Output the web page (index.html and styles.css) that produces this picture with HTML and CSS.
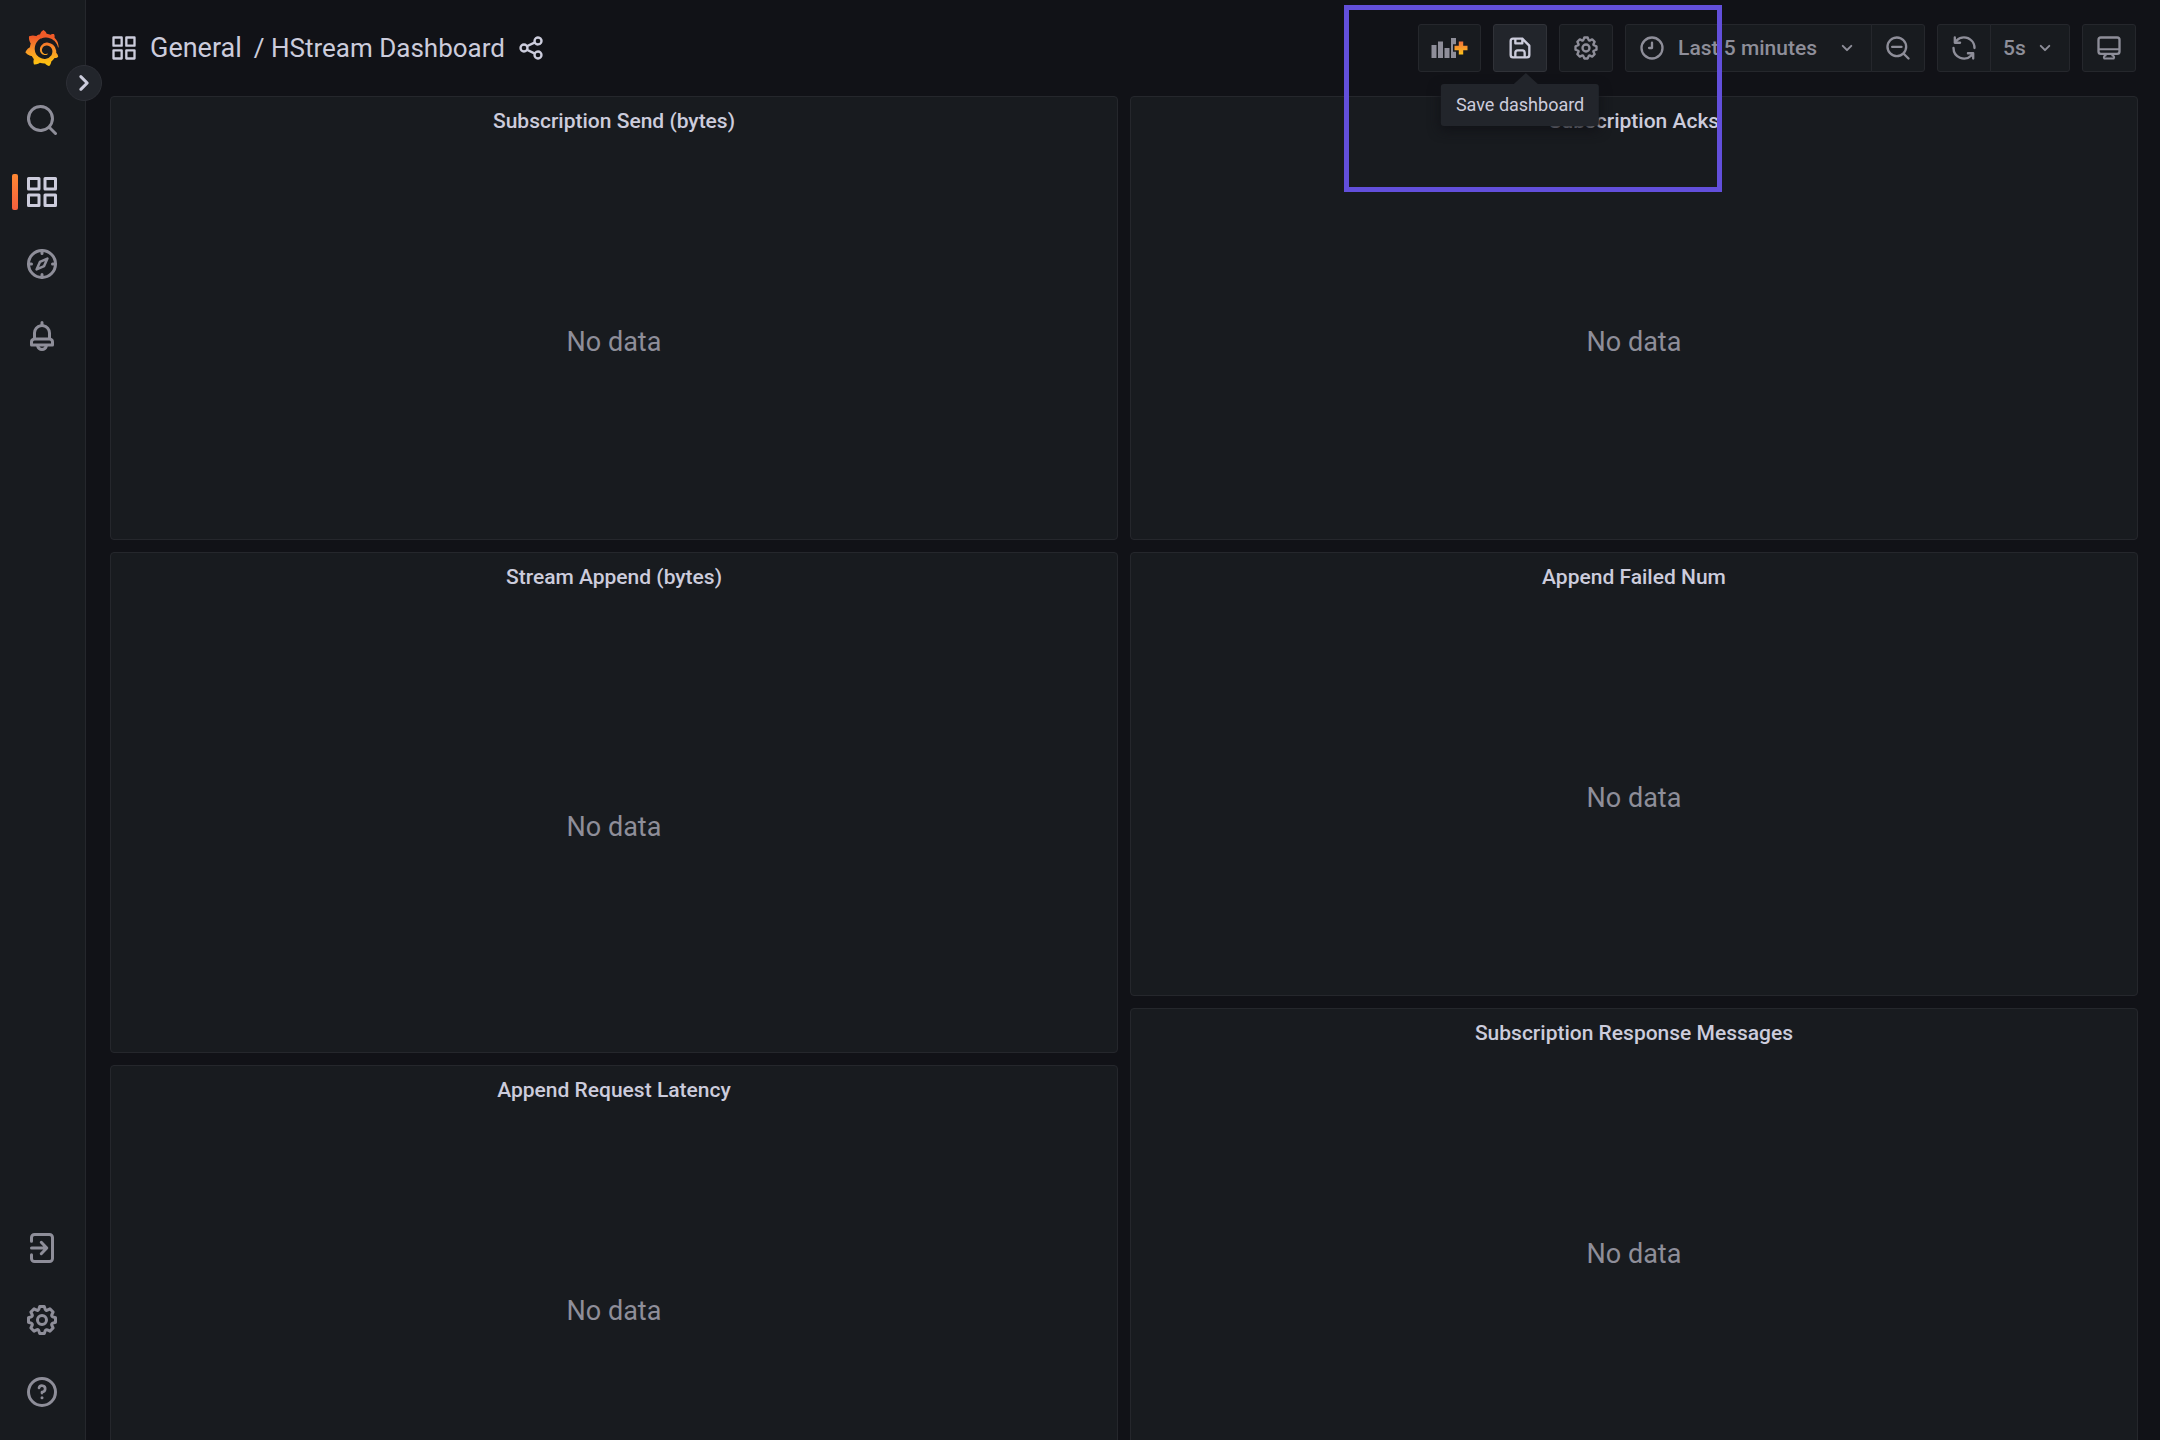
FILE: index.html
```html
<!DOCTYPE html>
<html lang="en">
<head>
<meta charset="utf-8">
<meta name="viewport" content="width=device-width, initial-scale=1">
<title>HStream Dashboard - Grafana</title>
<link rel="stylesheet" href="styles.css">
</head>
<body>
<svg class="sprite" aria-hidden="true">
  <defs>
    <linearGradient id="logo-fill" x1="0" y1="1" x2="0" y2="0">
      <stop offset="0" stop-color="#fcc90c"/>
      <stop offset="0.45" stop-color="#f9952a"/>
      <stop offset="0.8" stop-color="#f05a28"/>
      <stop offset="1" stop-color="#f05a28"/>
    </linearGradient>
    <linearGradient id="plus-fill" x1="0" y1="0" x2="0" y2="1">
      <stop offset="0" stop-color="#f2713a"/>
      <stop offset="1" stop-color="#fcc21b"/>
    </linearGradient>
  </defs>
  <symbol id="apps" viewBox="0 0 24 24"><path d="M10,13H3a1,1,0,0,0-1,1v7a1,1,0,0,0,1,1h7a1,1,0,0,0,1-1V14A1,1,0,0,0,10,13ZM9,20H4V15H9ZM21,2H14a1,1,0,0,0-1,1v7a1,1,0,0,0,1,1h7a1,1,0,0,0,1-1V3A1,1,0,0,0,21,2ZM20,9H15V4h5Zm1,4H14a1,1,0,0,0-1,1v7a1,1,0,0,0,1,1h7a1,1,0,0,0,1-1V14A1,1,0,0,0,21,13Zm-1,7H15V15h5ZM10,2H3A1,1,0,0,0,2,3v7a1,1,0,0,0,1,1h7a1,1,0,0,0,1-1V3A1,1,0,0,0,10,2ZM9,9H4V4H9Z"/></symbol>
  <symbol id="search" viewBox="0 0 24 24"><path d="M21.71,20.29,18,16.61A9,9,0,1,0,16.61,18l3.68,3.68a1,1,0,0,0,1.42,0A1,1,0,0,0,21.71,20.29ZM11,18a7,7,0,1,1,7-7A7,7,0,0,1,11,18Z"/></symbol>
  <symbol id="zoom-out" viewBox="0 0 24 24"><path d="M21.71,20.29,18,16.61A9,9,0,1,0,16.61,18l3.68,3.68a1,1,0,0,0,1.42,0A1,1,0,0,0,21.71,20.29ZM11,18a7,7,0,1,1,7-7A7,7,0,0,1,11,18ZM15,10H7a1,1,0,0,0,0,2h8a1,1,0,0,0,0-2Z"/></symbol>
  <symbol id="compass" viewBox="0 0 24 24"><g fill="none" stroke="currentColor" stroke-width="2" stroke-linecap="round" stroke-linejoin="round"><circle cx="12" cy="12" r="9"/><path d="M12 3v2M12 19v2M3 12h2M19 12h2"/><path stroke-width="1.7" d="M15.6 8.4l-2.2 5-5 2.2 2.2-5z"/></g></symbol>
  <symbol id="bell" viewBox="0 0 24 24"><path d="M18,13.18V10a6,6,0,0,0-5-5.91V3a1,1,0,0,0-2,0V4.09A6,6,0,0,0,6,10v3.18A3,3,0,0,0,4,16v2a1,1,0,0,0,1,1H8.14a4,4,0,0,0,7.72,0H19a1,1,0,0,0,1-1V16A3,3,0,0,0,18,13.18ZM8,10a4,4,0,0,1,8,0v3H8Zm4,10a2,2,0,0,1-1.72-1h3.44A2,2,0,0,1,12,20Zm6-3H6V16a1,1,0,0,1,1-1H17a1,1,0,0,1,1,1Z"/></symbol>
  <symbol id="signin" viewBox="0 0 24 24"><path fill="none" stroke="currentColor" stroke-width="2" stroke-linecap="round" stroke-linejoin="round" d="M5 7.5V5a2 2 0 0 1 2-2h10a2 2 0 0 1 2 2v14a2 2 0 0 1-2 2H7a2 2 0 0 1-2-2v-2.500M5 12h10M11.500 8.200L15.200 12l-3.700 3.800"/></symbol>
  <symbol id="cog" viewBox="0 0 24 24"><path d="M21.32,9.55l-1.89-.63.89-1.78A1,1,0,0,0,20.13,6L18,3.87a1,1,0,0,0-1.15-.19l-1.78.89-.63-1.89A1,1,0,0,0,13.5,2h-3a1,1,0,0,0-.95.68L8.92,4.57,7.14,3.68A1,1,0,0,0,6,3.87L3.87,6a1,1,0,0,0-.19,1.15l.89,1.78-1.89.63A1,1,0,0,0,2,10.5v3a1,1,0,0,0,.68.95l1.89.63-.89,1.78A1,1,0,0,0,3.87,18L6,20.13a1,1,0,0,0,1.15.19l1.78-.89.63,1.89a1,1,0,0,0,.95.68h3a1,1,0,0,0,.95-.68l.63-1.89,1.78.89A1,1,0,0,0,18,20.13L20.13,18a1,1,0,0,0,.19-1.15l-.89-1.78,1.89-.63A1,1,0,0,0,22,13.5v-3A1,1,0,0,0,21.32,9.55ZM20,12.78l-1.2.4A2,2,0,0,0,17.64,16l.57,1.14-1.1,1.1L16,17.64a2,2,0,0,0-2.79,1.16l-.4,1.2H11.22l-.4-1.2A2,2,0,0,0,8,17.64l-1.14.57-1.1-1.1L6.36,16A2,2,0,0,0,5.2,13.18L4,12.78V11.22l1.2-.4A2,2,0,0,0,6.36,8L5.79,6.89l1.1-1.1L8,6.36A2,2,0,0,0,10.82,5.2l.4-1.2h1.56l.4,1.2A2,2,0,0,0,16,6.36l1.14-.57,1.1,1.1L17.64,8a2,2,0,0,0,1.16,2.79l1.2.4ZM12,8a4,4,0,1,0,4,4A4,4,0,0,0,12,8Zm0,6a2,2,0,1,1,2-2A2,2,0,0,1,12,14Z"/></symbol>
  <symbol id="help" viewBox="0 0 24 24"><g fill="none" stroke="currentColor" stroke-width="2" stroke-linecap="round" stroke-linejoin="round"><circle cx="12" cy="12" r="9"/><path stroke-width="1.800" d="M10 9.300A2.100 2.100 0 1 1 12 12v.700"/></g><circle cx="12" cy="15.800" r="1"/></symbol>
  <symbol id="save" viewBox="0 0 24 24"><path d="M20.71,9.29l-6-6a1,1,0,0,0-.32-.21A1.09,1.09,0,0,0,14,3H6A3,3,0,0,0,3,6V18a3,3,0,0,0,3,3H18a3,3,0,0,0,3-3V10A1,1,0,0,0,20.71,9.29ZM9,5h4V7H9Zm6,14H9V16a1,1,0,0,1,1-1h4a1,1,0,0,1,1,1Zm4-1a1,1,0,0,1-1,1H17V16a3,3,0,0,0-3-3H10a3,3,0,0,0-3,3v3H6a1,1,0,0,1-1-1V6A1,1,0,0,1,6,5H7V8A1,1,0,0,0,8,9h6a1,1,0,0,0,1-1V6.41l4,4Z"/></symbol>
  <symbol id="clock" viewBox="0 0 24 24"><g fill="none" stroke="currentColor" stroke-width="2" stroke-linecap="round" stroke-linejoin="round"><circle cx="12" cy="12" r="9"/><path d="M12 7.500V12H9.500"/></g></symbol>
  <symbol id="share" viewBox="0 0 24 24"><path d="M18,14a4,4,0,0,0-3.08,1.48l-5.1-2.35a3.64,3.64,0,0,0,0-2.26l5.1-2.35A4,4,0,1,0,14,6a4.17,4.17,0,0,0,.07.71L8.79,9.14a4,4,0,1,0,0,5.72l5.28,2.43A4.17,4.17,0,0,0,14,18a4,4,0,1,0,4-4ZM18,4a2,2,0,1,1-2,2A2,2,0,0,1,18,4ZM6,14a2,2,0,1,1,2-2A2,2,0,0,1,6,14Zm12,6a2,2,0,1,1,2-2A2,2,0,0,1,18,20Z"/></symbol>
  <symbol id="sync" viewBox="0 0 24 24"><path d="M19.91,15.51H15.38a1,1,0,0,0,0,2h2.4A8,8,0,0,1,4,12a1,1,0,1,0-2,0,10,10,0,0,0,16.88,7.23V21a1,1,0,0,0,2,0V16.5A1,1,0,0,0,19.91,15.51ZM12,2A10,10,0,0,0,5.12,4.77V3a1,1,0,0,0-2,0V7.5a1,1,0,0,0,1,1h4.5a1,1,0,0,0,0-2H6.22A8,8,0,0,1,20,12a1,1,0,0,0,2,0A10,10,0,0,0,12,2Z"/></symbol>
  <symbol id="monitor" viewBox="0 0 24 24"><g fill="none" stroke="currentColor" stroke-width="2" stroke-linejoin="round"><rect x="3" y="3" width="18" height="14" rx="2"/><path d="M3 13h18M9.500 17l-.5 1.500a1.500 1.500 0 0 0-1 2.500h8a1.500 1.500 0 0 0-1-2.500l-.5-1.500" stroke-width="1.700"/></g></symbol>
  <symbol id="angle-down" viewBox="0 0 24 24"><path d="M17,9.17a1,1,0,0,0-1.41,0L12,12.71,8.46,9.17a1,1,0,0,0-1.41,0,1,1,0,0,0,0,1.42l4.24,4.24a1,1,0,0,0,1.42,0L17,10.59A1,1,0,0,0,17,9.17Z"/></symbol>
  <symbol id="angle-right" viewBox="0 0 24 24"><path d="M14.83,11.29,10.59,7.05a1,1,0,0,0-1.42,0,1,1,0,0,0,0,1.41L12.71,12,9.17,15.54a1,1,0,0,0,0,1.41,1,1,0,0,0,.71.29,1,1,0,0,0,.71-.29l4.24-4.24A1,1,0,0,0,14.83,11.29Z"/></symbol>
</svg>

<div class="app">
  <nav class="sidebar" aria-label="Main">
    <a class="nav-item" href="#home" aria-label="Home">
      <svg class="logo" viewBox="0 0 24 24"><path fill="url(#logo-fill)" d="M23.02 10.59a8.578 8.578 0 0 0-.862-3.034 8.911 8.911 0 0 0-1.789-2.445c.337-1.342-.413-2.505-.413-2.505-1.292-.08-2.113.4-2.416.62-.052-.02-.102-.044-.154-.064-.22-.089-.446-.172-.677-.247-.231-.073-.47-.14-.711-.197a9.867 9.867 0 0 0-.875-.161C14.557.753 12.94 0 12.94 0c-1.804 1.145-2.147 2.744-2.147 2.744l-.018.093c-.098.029-.2.057-.298.088-.138.042-.275.094-.413.143-.138.055-.275.107-.41.166a8.869 8.869 0 0 0-1.557.87l-.063-.029c-2.497-.955-4.716.195-4.716.195-.203 2.658.996 4.33 1.235 4.636a11.608 11.608 0 0 0-.607 2.635C1.636 12.677.953 15.014.953 15.014c1.926 2.214 4.171 2.351 4.171 2.351.003-.002.006-.002.006-.005.285.509.615.994.986 1.446.156.19.32.371.488.548-.704 2.009.099 3.68.099 3.68 2.144.08 3.553-.937 3.849-1.173a9.784 9.784 0 0 0 3.164.501h.08l.055-.003.107-.002.103-.005.003.002c1.01 1.44 2.788 1.646 2.788 1.646 1.264-1.332 1.337-2.653 1.337-2.94v-.058c0-.02-.003-.039-.003-.06.265-.187.52-.387.758-.6a7.875 7.875 0 0 0 1.415-1.7c1.43.083 2.437-.885 2.437-.885-.236-1.49-1.085-2.216-1.264-2.354l-.018-.013-.016-.013a.217.217 0 0 1-.031-.02c.008-.092.016-.18.02-.27.011-.162.016-.323.016-.48v-.253l-.005-.098-.008-.135a1.891 1.891 0 0 0-.01-.13c-.003-.042-.008-.083-.013-.125l-.016-.124-.018-.122a6.215 6.215 0 0 0-2.032-3.73 6.015 6.015 0 0 0-3.222-1.46 6.292 6.292 0 0 0-.85-.048l-.107.002h-.063l-.044.003-.104.008a4.777 4.777 0 0 0-3.335 1.695c-.332.4-.592.84-.768 1.297a4.594 4.594 0 0 0-.312 1.817l.003.091c.005.055.007.11.013.164a3.615 3.615 0 0 0 .698 1.82 3.53 3.53 0 0 0 1.827 1.282c.33.098.66.14.971.137.039 0 .078 0 .114-.002l.063-.003c.02 0 .041-.003.062-.003.034-.002.065-.007.099-.01.007 0 .018-.003.028-.003l.031-.005.06-.008a1.18 1.18 0 0 0 .112-.02c.036-.008.072-.013.109-.024a2.634 2.634 0 0 0 .914-.415c.028-.02.056-.041.085-.065a.248.248 0 0 0 .039-.35.244.244 0 0 0-.309-.06l-.078.042c-.09.044-.184.083-.283.116a2.476 2.476 0 0 1-.475.096c-.028.003-.054.006-.083.006l-.083.002c-.026 0-.054 0-.08-.002l-.102-.006h-.012l-.024.006c-.016-.003-.031-.003-.044-.006-.031-.002-.06-.007-.091-.01a2.59 2.59 0 0 1-.724-.213 2.557 2.557 0 0 1-.667-.438 2.52 2.52 0 0 1-.805-1.475 2.306 2.306 0 0 1-.029-.444l.006-.122v-.023l.002-.031c.003-.021.003-.04.005-.06a3.163 3.163 0 0 1 1.352-2.29 3.12 3.12 0 0 1 .937-.43 2.946 2.946 0 0 1 .776-.101h.06l.07.002.045.003h.026l.07.005a4.041 4.041 0 0 1 1.635.49 3.94 3.94 0 0 1 1.602 1.662 3.77 3.77 0 0 1 .397 1.414l.005.076.003.075c.002.026.002.05.002.075 0 .024.003.052 0 .07v.065l-.002.073-.008.174a6.195 6.195 0 0 1-.08.639 5.1 5.1 0 0 1-.267.927 5.31 5.31 0 0 1-.624 1.13 5.052 5.052 0 0 1-3.237 2.014 4.82 4.82 0 0 1-.649.066l-.039.003h-.287a6.607 6.607 0 0 1-1.716-.265 6.776 6.776 0 0 1-3.4-2.274 6.75 6.75 0 0 1-.746-1.15 6.616 6.616 0 0 1-.714-2.596l-.005-.083-.002-.02v-.056l-.003-.073v-.096l-.003-.104v-.07l.003-.163c.008-.22.026-.45.054-.678a8.707 8.707 0 0 1 .28-1.355c.128-.444.286-.872.473-1.277a7.04 7.04 0 0 1 1.456-2.1 5.925 5.925 0 0 1 .953-.763c.169-.111.343-.213.524-.306.089-.05.182-.091.273-.135.047-.02.093-.042.138-.062a7.177 7.177 0 0 1 .714-.267l.145-.045c.049-.015.098-.026.148-.041.098-.029.197-.052.296-.076.049-.013.1-.02.15-.033l.15-.032.151-.028.076-.013.075-.01.153-.024c.057-.01.114-.013.171-.023l.169-.021c.036-.003.073-.008.106-.01l.073-.008.036-.003.042-.002c.057-.003.114-.008.171-.01l.086-.006h.023l.037-.003.145-.007a7.999 7.999 0 0 1 1.708.125 7.917 7.917 0 0 1 2.048.68 8.253 8.253 0 0 1 1.672 1.09l.09.077.089.078c.06.052.114.107.171.159.057.052.112.106.166.16.052.055.107.107.159.164a8.671 8.671 0 0 1 1.41 1.978c.012.026.028.052.04.078l.04.078.075.156c.023.051.05.1.07.153l.065.15a8.848 8.848 0 0 1 .45 1.34.19.19 0 0 0 .201.142.186.186 0 0 0 .172-.184c.01-.246.002-.532-.024-.856z"/></svg>
    </a>
    <a class="nav-item" href="#search" aria-label="Search dashboards"><svg class="icon-lg"><use href="#search"/></svg></a>
    <a class="nav-item nav-item-active" href="#dashboards" aria-label="Dashboards" aria-current="page"><svg class="icon-lg"><use href="#apps"/></svg></a>
    <a class="nav-item" href="#explore" aria-label="Explore"><svg class="icon-lg"><use href="#compass"/></svg></a>
    <a class="nav-item" href="#alerting" aria-label="Alerting"><svg class="icon-lg"><use href="#bell"/></svg></a>
    <span class="nav-spacer"></span>
    <a class="nav-item" href="#login" aria-label="Sign in"><svg class="icon-lg"><use href="#signin"/></svg></a>
    <a class="nav-item" href="#config" aria-label="Configuration"><svg class="icon-lg"><use href="#cog"/></svg></a>
    <a class="nav-item" href="#help-menu" aria-label="Help"><svg class="icon-lg"><use href="#help"/></svg></a>
    <button class="sidebar-toggle" type="button" aria-label="Expand menu"><svg class="icon-lg"><use href="#angle-right"/></svg></button>
  </nav>

  <main class="main">
    <header class="topbar">
      <h1 class="breadcrumb">
        <svg class="icon"><use href="#apps"/></svg>
        <a class="crumb-folder" href="#general">General</a>
        <a class="crumb-title" href="#dashboard">/ HStream Dashboard</a>
        <button class="share" type="button" aria-label="Share dashboard"><svg class="icon"><use href="#share"/></svg></button>
      </h1>
      <div class="toolbar">
        <button class="tool" type="button" aria-label="Add panel">
          <svg class="add-panel" viewBox="0 0 36 20">
            <path d="M0 7h5v13H0zM6.500 3.500h5V20h-5zM13 10h5v10h-5zM19.500 0h5v20h-5z"/>
            <path class="plus-gap" d="M27.300 3.500h4.400v4.300H36v4.400h-4.300v4.300h-4.400v-4.300H23V7.800h4.300z"/>
            <path fill="url(#plus-fill)" d="M27.300 3.500h4.400v4.300H36v4.400h-4.300v4.300h-4.400v-4.300H23V7.800h4.300z"/>
          </svg>
        </button>
        <div class="tool-anchor">
          <button class="tool tool-hover" type="button" aria-label="Save dashboard" aria-describedby="save-tip"><svg class="icon"><use href="#save"/></svg></button>
          <div class="tooltip" id="save-tip" role="tooltip">Save dashboard</div>
        </div>
        <button class="tool" type="button" aria-label="Dashboard settings"><svg class="icon"><use href="#cog"/></svg></button>
        <div class="tool-group">
          <button class="tool tool-time" type="button" aria-haspopup="dialog">
            <svg class="icon"><use href="#clock"/></svg>
            <span class="time-range">Last 5 minutes</span>
            <svg class="icon-sm"><use href="#angle-down"/></svg>
          </button>
          <button class="tool" type="button" aria-label="Zoom out time range"><svg class="icon"><use href="#zoom-out"/></svg></button>
        </div>
        <div class="tool-group">
          <button class="tool" type="button" aria-label="Refresh dashboard"><svg class="icon"><use href="#sync"/></svg></button>
          <label class="tool tool-interval">
            <select class="interval" aria-label="Refresh interval">
              <option selected>5s</option>
            </select>
            <svg class="icon-sm"><use href="#angle-down"/></svg>
          </label>
        </div>
        <button class="tool" type="button" aria-label="Cycle view mode"><svg class="icon"><use href="#monitor"/></svg></button>
      </div>
    </header>

    <div class="dashboard">
      <div class="column">
        <section class="panel"><h2 class="panel-title">Subscription Send (bytes)</h2><p class="panel-empty">No data</p></section>
        <section class="panel panel-tall"><h2 class="panel-title">Stream Append (bytes)</h2><p class="panel-empty">No data</p></section>
        <section class="panel"><h2 class="panel-title">Append Request Latency</h2><p class="panel-empty">No data</p></section>
      </div>
      <div class="column">
        <section class="panel"><h2 class="panel-title">Subscription Acks</h2><p class="panel-empty">No data</p></section>
        <section class="panel"><h2 class="panel-title">Append Failed Num</h2><p class="panel-empty">No data</p></section>
        <section class="panel"><h2 class="panel-title">Subscription Response Messages</h2><p class="panel-empty">No data</p></section>
      </div>
    </div>
  </main>
</div>
<div class="highlight" aria-hidden="true"></div>
</body>
</html>
```
FILE: styles.css
```css
:root {
  --canvas: #111217;
  --surface: #181b1f;
  --raised: #22252b;
  --border: #25272c;
  --text: #ccccdc;
  --muted: #8e8e99;
}

* { box-sizing: border-box; }

body {
  margin: 0;
  background: var(--canvas);
  color: var(--text);
  font-family: Roboto, "Liberation Sans", sans-serif;
  font-size: 21px;
}

a { color: inherit; text-decoration: none; }

button, select {
  font: inherit;
  color: inherit;
  background: none;
  border: 0;
  padding: 0;
  cursor: pointer;
}

svg { display: block; flex: none; fill: currentColor; }

.sprite { position: absolute; width: 0; height: 0; }
.icon { width: 28px; height: 28px; }
.icon-sm { width: 24px; height: 24px; }
.icon-lg { width: 36px; height: 36px; }

.app { display: flex; height: 100vh; }

/* Sidebar */
.sidebar {
  position: relative;
  z-index: 1;
  display: flex;
  flex-direction: column;
  flex: none;
  width: 86px;
  padding: 12px 1px 12px 0;
  background: var(--surface);
  border-right: 1px solid var(--border);
  color: var(--muted);
}

.nav-item {
  position: relative;
  display: flex;
  align-items: center;
  justify-content: center;
  height: 72px;
}

.nav-item-active { color: var(--text); }

.nav-item-active::before {
  content: "";
  position: absolute;
  left: 12px;
  top: 18px;
  width: 6px;
  height: 36px;
  border-radius: 2px;
  background: linear-gradient(#ff8833, #f55f3e);
}

.nav-spacer { flex: 1; }
.logo { width: 36px; height: 36px; }

.sidebar-toggle {
  position: absolute;
  top: 65px;
  right: -17px;
  display: flex;
  align-items: center;
  justify-content: center;
  width: 36px;
  height: 36px;
  border: 1px solid #2d2f36;
  border-radius: 50%;
  background: var(--raised);
  color: var(--text);
}

/* Top bar */
.main {
  flex: 1;
  min-width: 0;
  overflow-y: auto;
  scrollbar-width: none;
}

.topbar {
  display: flex;
  align-items: center;
  justify-content: space-between;
  height: 96px;
  padding: 0 24px;
}

.breadcrumb {
  display: flex;
  align-items: center;
  gap: 12px;
  margin: 0;
  font-size: 27px;
  font-weight: 400;
  white-space: nowrap;
}

.crumb-title { font-size: 26px; }

.toolbar { display: flex; gap: 12px; }
.tool-group { display: flex; }
.tool-group .tool + .tool { margin-left: -1px; border-radius: 0 3px 3px 0; }
.tool-group .tool:first-child { border-radius: 3px 0 0 3px; }
.tool-anchor { position: relative; z-index: 2; }

.tool {
  display: flex;
  align-items: center;
  height: 48px;
  padding: 0 12px;
  border: 1px solid var(--border);
  border-radius: 3px;
  background: var(--surface);
  color: var(--muted);
  font-weight: 500;
  white-space: nowrap;
}

.tool-hover {
  background: var(--raised);
  border-color: #303238;
  color: var(--text);
}

.tool-time { gap: 12px; }
.time-range { padding-right: 6px; }
.tool-interval { gap: 7px; }
.interval { appearance: none; }

.add-panel { width: 37px; height: 20px; }
.plus-gap { stroke: var(--surface); stroke-width: 3; }

.tooltip {
  position: absolute;
  top: 60px;
  left: 50%;
  transform: translateX(-50%);
  padding: 0 15px;
  border-radius: 3px;
  background: var(--raised);
  box-shadow: 0 4px 12px #111217;
  font-size: 18px;
  line-height: 42px;
  white-space: nowrap;
}

.tooltip::before {
  content: "";
  position: absolute;
  left: 50%;
  bottom: 100%;
  margin-left: -6px;
  border: 12px solid transparent;
  border-top: 0;
  border-bottom: 11px solid var(--raised);
}

/* Dashboard grid */
.dashboard {
  display: grid;
  grid-template-columns: 1fr 1fr;
  gap: 12px;
  padding: 0 22px 24px 24px;
}

.column { display: flex; flex-direction: column; gap: 12px; }

.panel {
  display: flex;
  flex-direction: column;
  min-height: 444px;
  border: 1px solid var(--border);
  border-radius: 4px;
  background: var(--surface);
}

.panel-tall { min-height: 501px; }

.panel-title {
  margin: 0;
  font-size: 21px;
  font-weight: 500;
  line-height: 48px;
  text-align: center;
}

.panel-empty {
  display: flex;
  flex: 1;
  align-items: center;
  justify-content: center;
  margin: 0;
  color: var(--muted);
  font-size: 27px;
}

/* Callout frame over the save control */
.highlight {
  position: absolute;
  z-index: 3;
  top: 5px;
  right: 438px;
  width: 378px;
  height: 187px;
  border: 5px solid #624fdb;
  pointer-events: none;
}
```
